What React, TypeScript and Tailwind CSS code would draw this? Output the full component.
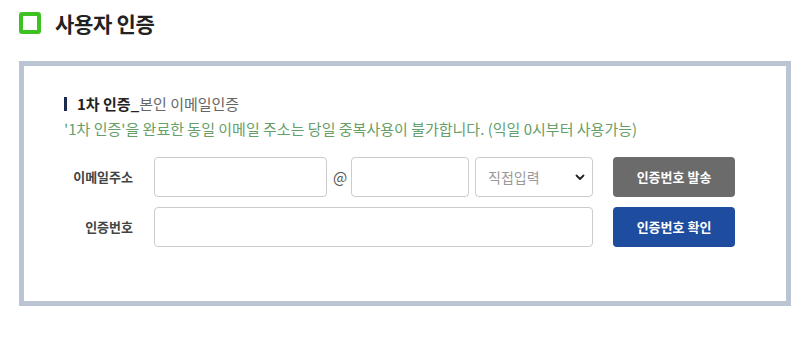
import React from 'react';

const FONT = "font-['Noto_Sans_CJK_KR','Noto_Sans',sans-serif]";

const App: React.FC = () => {
  return (
    <div className={`w-[800px] h-[345px] bg-white text-[#222] ${FONT}`}>
      {/* Page title */}
      <div className="flex items-center gap-[14px] pl-[19px] pt-[12px] h-[34px]">
        <div className="w-[22px] h-[22px] border-[4px] border-[#3ec222] rounded-[3px]" />
        <h2 className="text-[21px] font-bold leading-[22px] tracking-[-0.3px]">사용자 인증</h2>
      </div>

      {/* Auth box */}
      <div className="ml-[19px] mt-[27px] w-[772px] h-[245px] border-[5px] border-[#bac4d3] bg-white pl-[40px] pt-[26px]">
        <div className="flex items-center gap-[10px] leading-[24px]">
          <span className="w-[3px] h-[14px] bg-[#1b2c4f]" />
          <p className="text-[15px] text-[#666]">
            <span className="font-bold text-[#222]">1차 인증_</span>본인 이메일인증
          </p>
        </div>
        <p className="text-[15px] leading-[26px] text-[#66a068]">
          '1차 인증'을 완료한 동일 이메일 주소는 당일 중복사용이 불가합니다. (익일 0시부터 사용가능)
        </p>

        <div className="mt-[15px] flex flex-col gap-[10px]">
          {/* Row: email */}
          <div className="flex items-center h-[40px]">
            <label className="w-[69px] text-right text-[13px] font-bold text-[#444] whitespace-nowrap">이메일주소</label>
            <input className="ml-[21px] w-[173px] h-[40px] border border-[#ccc] rounded-[4px] outline-none" />
            <span className="ml-[6px] w-[13px] text-[15px] text-[#555]">@</span>
            <input className="ml-[5px] w-[118px] h-[40px] border border-[#ccc] rounded-[4px] outline-none" />
            <div className="ml-[6px] w-[118px] h-[40px] border border-[#ccc] rounded-[4px] flex items-center justify-between pl-[12px] pr-[7px]">
              <span className="text-[14px] text-[#999]">직접입력</span>
              <svg width="10" height="7" viewBox="0 0 10 7" fill="none">
                <path d="M1.5 1.5 L5 5 L8.5 1.5" stroke="#222" strokeWidth="1.8" strokeLinecap="round" strokeLinejoin="round" />
              </svg>
            </div>
            <button className="ml-[20px] w-[122px] h-[40px] rounded-[4px] bg-[#6b6b6b] text-white text-[13px] font-bold">
              인증번호 발송
            </button>
          </div>

          {/* Row: code */}
          <div className="flex items-center h-[40px]">
            <label className="w-[69px] text-right text-[13px] font-bold text-[#444]">인증번호</label>
            <input className="ml-[21px] w-[439px] h-[40px] border border-[#ccc] rounded-[4px] outline-none" />
            <button className="ml-[20px] w-[122px] h-[40px] rounded-[4px] bg-[#1e4d9f] text-white text-[13px] font-bold">
              인증번호 확인
            </button>
          </div>
        </div>
      </div>
    </div>
  );
};

export default App;
